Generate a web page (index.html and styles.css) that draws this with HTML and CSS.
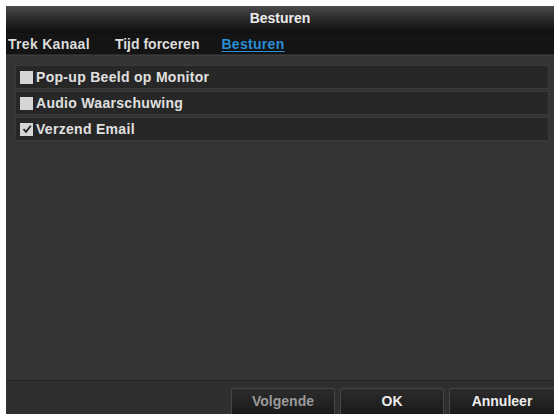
FILE: index.html
```html
<!DOCTYPE html>
<html>
<head>
<meta charset="utf-8">
<link rel="stylesheet" href="styles.css">
</head>
<body>
<div class="window">
  <div class="titlebar">Besturen</div>
  <div class="tabs">
    <span class="tab">Trek Kanaal</span>
    <span class="tab">Tijd forceren</span>
    <span class="tab active">Besturen</span>
  </div>
  <div class="content">
    <div class="list">
      <div class="row"><span class="cb"></span><span class="label">Pop-up Beeld op Monitor</span></div>
      <div class="row"><span class="cb"></span><span class="label">Audio Waarschuwing</span></div>
      <div class="row"><span class="cb checked"><svg viewBox="0 0 12 12" width="12" height="12"><path d="M2.5 6.2 L5 8.8 L9.8 2.8" fill="none" stroke="#222" stroke-width="1.8"/></svg></span><span class="label">Verzend Email</span></div>
    </div>
  </div>
  <div class="footer">
    <button class="btn disabled">Volgende</button>
    <button class="btn">OK</button>
    <button class="btn last">Annuleer</button>
  </div>
</div>
</body>
</html>
```
FILE: styles.css
```css
html, body {
  margin: 0;
  padding: 0;
  background: #ffffff;
}
body {
  font-family: "Liberation Sans", Arial, sans-serif;
  font-size: 14px;
  font-weight: bold;
  letter-spacing: 0.3px;
  color: #e0e0e0;
}
.window {
  margin: 6px 0 0 6px;
  width: 548px;
  height: 408px;
  background: #343434;
  display: flex;
  flex-direction: column;
  overflow: hidden;
}
.titlebar {
  height: 27px;
  flex: none;
  display: flex;
  align-items: center;
  justify-content: center;
  background: linear-gradient(#4a4a4a 0%, #2c2c2c 45%, #0e0e0e 100%);
  color: #ececec;
  padding-bottom: 3px;
  box-sizing: border-box;
  letter-spacing: 0;
}
.tabs {
  height: 22px;
  flex: none;
  background: #141414;
  display: flex;
  align-items: center;
  padding-left: 2px;
  box-sizing: border-box;
  border-bottom: 1px solid #2a2a2a;
}
.tab {
  color: #dcdcdc;
  margin-right: 25px;
}
.tab:nth-child(2) {
  letter-spacing: 0;
  margin-right: 22px;
}
.tab.active {
  color: #2a8fd6;
  text-decoration: underline;
  text-underline-offset: 2px;
}
.content {
  flex: 1;
  padding: 9px 5px 0 9px;
  border-top: 1px solid #3c3c3c;
}
.list {
  display: flex;
  flex-direction: column;
  gap: 2px;
}
.row {
  height: 24px;
  box-sizing: border-box;
  background: #272727;
  border: 1px solid #3a3a3a;
  display: flex;
  align-items: center;
  padding-left: 4px;
}
.cb {
  width: 13px;
  height: 13px;
  background: #d6d6d6;
  margin-right: 3px;
  display: flex;
  align-items: center;
  justify-content: center;
  flex: none;
}
.label {
  color: #e0e0e0;
}
.footer {
  height: 34px;
  flex: none;
  background: #2f2f2f;
  border-top: 1px solid #262626;
  display: flex;
  justify-content: flex-end;
  align-items: flex-start;
  padding-top: 7px;
  box-sizing: border-box;
  gap: 5px;
}
.btn {
  width: 104px;
  height: 30px;
  font: inherit;
  letter-spacing: 0;
  color: #ececec;
  background: linear-gradient(#2c2c2c, #181818);
  border: 1px solid #454545;
  border-radius: 2px;
  padding: 0 0 4px 0;
}
.btn.disabled {
  color: #9a9a9a;
}
.btn.last {
  width: 106px;
  margin-right: -1px;
}
```
